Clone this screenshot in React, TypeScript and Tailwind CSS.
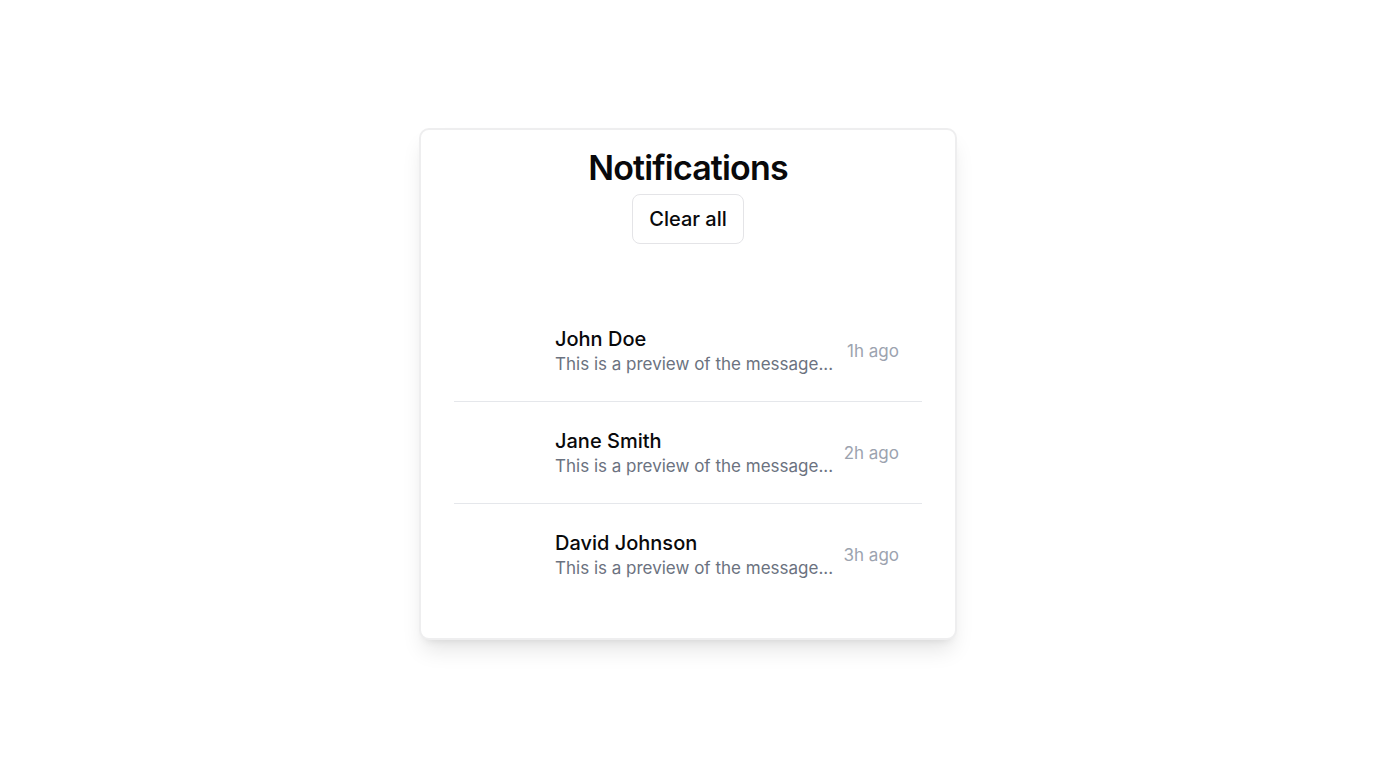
const notifications = [
  { name: "John Doe", message: "This is a preview of the message...", time: "1h ago" },
  { name: "Jane Smith", message: "This is a preview of the message...", time: "2h ago" },
  { name: "David Johnson", message: "This is a preview of the message...", time: "3h ago" },
];

export default function App() {
  return (
    <main className="flex min-h-screen items-center justify-center bg-white font-['Inter',sans-serif] text-[#09090b]">
      <section className="w-full max-w-[538px] rounded-[10px] border-2 border-[#eeeeef] bg-white shadow-[0_14px_21px_-4px_rgba(0,0,0,0.1),0_6px_8px_-6px_rgba(0,0,0,0.1)]">
        <header className="flex flex-col items-center gap-1 px-8 pt-4">
          <h1 className="text-[34px] leading-[44px] font-semibold tracking-tight">Notifications</h1>
          <button type="button" className="h-[50px] rounded-lg border border-[#e4e4e7] px-4 text-[20px] leading-7 font-medium">
            Clear all
          </button>
        </header>
        <ul className="divide-y divide-[#e5e7eb] px-[33px] pt-14 pb-[33px]">
          {notifications.map((item) => (
            <li key={item.name} className="flex items-center justify-between pt-[26px] pr-[23px] pb-6 pl-[101px]">
              <div>
                <h2 className="text-[20px] leading-[26px] font-medium">{item.name}</h2>
                <p className="text-[17px] leading-[25px] text-[#6b7280]">{item.message}</p>
              </div>
              <time className="text-[17px] leading-[25px] text-[#9ca3af]">{item.time}</time>
            </li>
          ))}
        </ul>
      </section>
    </main>
  );
}
